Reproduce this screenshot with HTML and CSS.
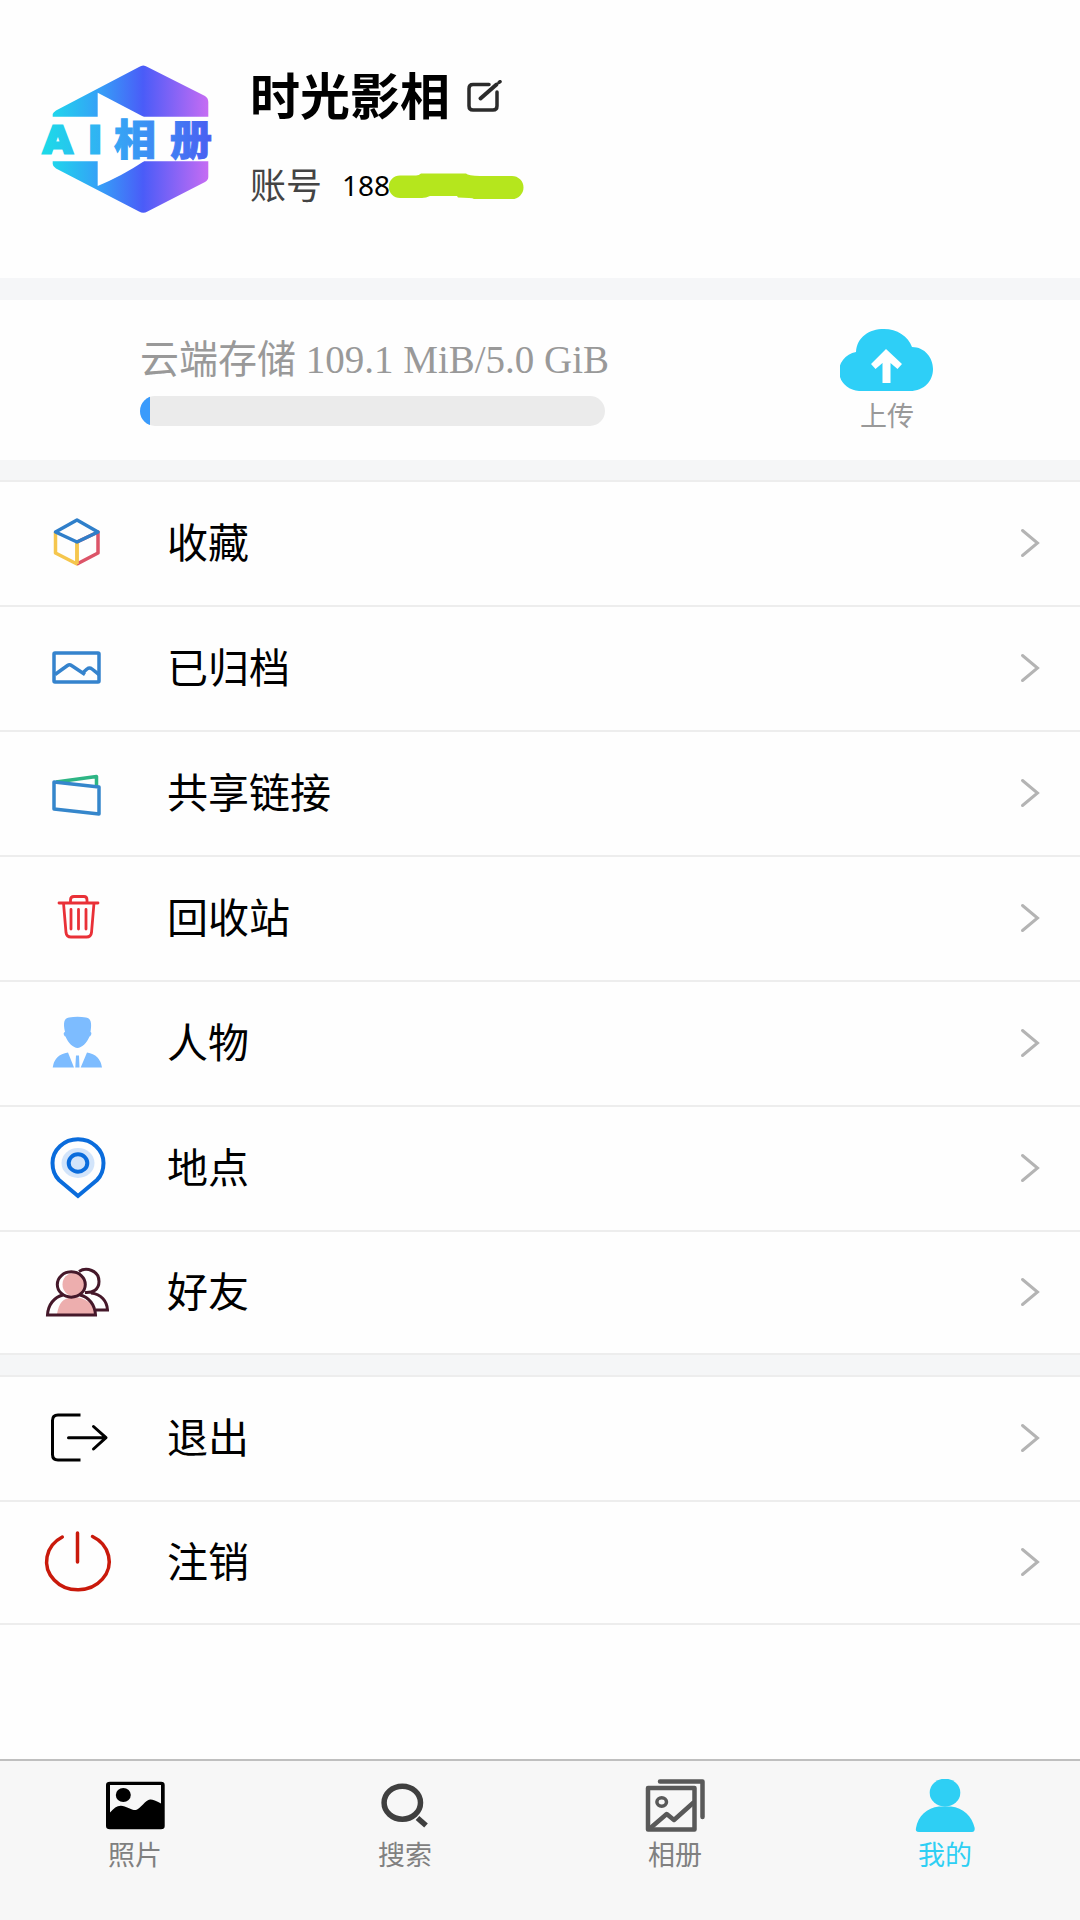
FILE: index.html
```html
<!DOCTYPE html>
<html lang="zh-CN">
<head>
<meta charset="utf-8">
<meta name="viewport" content="width=device-width, initial-scale=1">
<title>我的</title>
<link rel="stylesheet" href="styles.css">
</head>
<body>
<svg class="sprite" width="0" height="0" aria-hidden="true">
  <symbol id="chevron" viewBox="0 0 20 30"><path d="M2.500 2.500 17.500 15 2.500 27.500" fill="none" stroke="#b4b4b4" stroke-width="3" stroke-linecap="round"/></symbol>
</svg>

<header class="profile">
  <svg class="logo" viewBox="0 0 176 160" role="img" aria-label="AI相册">
    <defs>
      <linearGradient id="hex" gradientUnits="userSpaceOnUse" x1="12" y1="0" x2="169" y2="0">
        <stop offset="0" stop-color="#1fd6ec"/><stop offset=".3" stop-color="#35a0f7"/><stop offset=".58" stop-color="#4a5cf8"/><stop offset="1" stop-color="#c76cf3"/>
      </linearGradient>
      <linearGradient id="word" gradientUnits="userSpaceOnUse" x1="2" y1="0" x2="173" y2="0">
        <stop offset="0" stop-color="#1cdbe8"/><stop offset=".4" stop-color="#35aaf5"/><stop offset=".7" stop-color="#3f86f4"/><stop offset="1" stop-color="#4a5cf2"/>
      </linearGradient>
    </defs>
    <path d="M12.700 56.700V54Q13 52.500 16 50.500L99 7Q103.300 4 107.500 7L165 36Q168.300 38 168.300 42V56.700ZM12.700 101.300H168.300V117Q168.300 120 165 122L107.500 151.500Q103.300 154 99 151.500L16 108.500Q12.700 106.500 12.700 104Z" fill="url(#hex)"/>
    <path d="M57.700 32.700 104 57V101.300Q82 116 57.700 126Z" fill="#fff"/>
    <g fill="url(#word)" stroke="url(#word)">
      <text class="logo-latin" x="3" y="93">A</text>
      <text class="logo-latin" x="48" y="93">I</text>
      <text class="logo-cjk" x="74" y="95">相</text>
      <text class="logo-cjk" x="130" y="95">册</text>
    </g>
  </svg>
  <div class="identity">
    <div class="name-line">
      <h1>时光影相</h1>
      <button class="edit" type="button" aria-label="编辑">
        <svg width="36" height="32" viewBox="0 0 36 32" fill="none" stroke="#2b2b2b" stroke-width="3.500" stroke-linecap="round"><path d="M23 4.500H7Q3 4.500 3 8.500V26Q3 30 7 30H27Q31 30 31 26V12"/><path d="M14.500 18.500 30.500 4.500" stroke-width="4"/><path d="M33 2.500 34 1.700"/></svg>
      </button>
    </div>
    <p class="account"><span class="caption">账号</span><span class="number">188</span><svg class="mask" width="136" height="28" viewBox="0 0 136 28" aria-hidden="true"><path d="M12 3.500H28Q31 3.500 33 1.500H78Q80 3.500 92 4H124A11.500 11.500 0 0 1 124 27H86Q84 25.500 70 25.500L69 24H42Q38 26 34 26H12A11 11 0 0 1 12 3.500Z" fill="#b5e61d"/></svg></p>
  </div>
</header>

<main>
  <section class="storage">
    <div class="usage">
      <label for="quota">云端存储 109.1 MiB/5.0 GiB</label>
      <progress id="quota" max="5120" value="109.1"></progress>
    </div>
    <button class="upload" type="button">
      <svg width="94" height="62" viewBox="0 0 94 62"><path d="M21 62A21 19.700 0 0 1 16 23C17 8 29 0 44 0 57 0 68 7 72 18 85 18 93 29 93 40 93 52 84 62 70 62Z" fill="#2ecff7"/><path d="M42.500 54V34L35.500 40 31 35 46 20 62 35 57.500 40 50.500 34V54Z" fill="#fff"/></svg>
      <span>上传</span>
    </button>
  </section>

  <nav class="menu" aria-label="相册管理">
    <a href="#favorites">
      <svg class="icon" viewBox="0 0 76 76" fill="none" stroke-width="3.500" stroke-linejoin="round"><path d="M16.500 27V48L38 59V37" stroke="#f5c64d"/><path d="M38 59 59 48V27L38 37" stroke="#dc5468"/><path d="M38 37V59" stroke="#f5c64d"/><path d="M38 15 59 27 38 37 16.500 27Z" stroke="#2f7fca"/></svg>
      <span>收藏</span><svg class="chevron"><use href="#chevron"/></svg>
    </a>
    <a href="#archive">
      <svg class="icon" viewBox="0 0 76 76" fill="none" stroke="#3583cd" stroke-width="3.500" stroke-linejoin="round"><rect x="15" y="23" width="45" height="29" rx="1"/><path d="M16 44.500 28.500 35.500Q30.500 34 32.500 35.500L46 44.500M43.500 43 48 39Q50.500 37 53 39L60 44.500"/></svg>
      <span>已归档</span><svg class="chevron"><use href="#chevron"/></svg>
    </a>
    <a href="#shared">
      <svg class="icon" viewBox="0 0 76 76" fill="none" stroke-width="3.500" stroke-linejoin="round"><path d="M17 27 57.500 21.500V32" stroke="#2db584"/><path d="M15 27 60 32V59L15 54Z" stroke="#3586cb"/></svg>
      <span>共享链接</span><svg class="chevron"><use href="#chevron"/></svg>
    </a>
    <a href="#trash">
      <svg class="icon" viewBox="0 0 76 76" fill="none" stroke="#e93037" stroke-width="2.800" stroke-linecap="round"><path d="M20 23H59M31.500 22V20Q31.500 16.500 35 16.500H45Q48 16.500 48 20V22M24.500 23 27 52.500Q27.500 57 32 57H47.500Q52 57 52.500 52.500L55 23M32 29.500V49M39.500 29.500V49M47 29.500V49"/></svg>
      <span>回收站</span><svg class="chevron"><use href="#chevron"/></svg>
    </a>
    <a href="#people">
      <svg class="icon" viewBox="0 0 76 76" fill="#7dbcff"><path d="M26 27C24 18 25 13 30 12.500Q38.500 11 47 12.500C52 13 53 18 51.500 27 53 27 52.500 31 50.500 31.500 48 38 42.500 43 38.500 43S29 38 26.500 31.500C24.500 31 24 27 26 27ZM29 47.500 35 62.500H13.700Q15.500 49.500 29 47.500ZM48 47.500 41.700 62.500H63Q61 49.500 48 47.500ZM37 50.500H40L40.500 62.500H36.300Z"/></svg>
      <span>人物</span><svg class="chevron"><use href="#chevron"/></svg>
    </a>
    <a href="#places">
      <svg class="icon" viewBox="0 0 76 76" fill="none" stroke="#0a6cdc" stroke-width="4"><ellipse cx="39" cy="33" rx="16.500" ry="15" fill="#d2e4fa" stroke="none"/><ellipse cx="39" cy="33" rx="9.300" ry="8.700"/><path d="M39 66 20 50C15 45 13.500 40 13.500 33A25.500 23.700 0 0 1 64.500 33C64.500 40 63 45 58 50Z"/></svg>
      <span>地点</span><svg class="chevron"><use href="#chevron"/></svg>
    </a>
    <a href="#friends">
      <svg class="icon" viewBox="0 0 76 76" fill="none" stroke="#45182a" stroke-width="3"><path d="M40 17.500C47 13 60 16 60 27.500 60 35.500 54 39 46 38.500M52 39C62 40 68 47 68.500 56H57"/><path d="M18 60C20 49 24 44 33 43.500 44 42 55 49 56 60Z" fill="#edaeae" stroke="none"/><ellipse cx="34.500" cy="30.500" rx="11" ry="11.500" fill="#edaeae" stroke="none"/><ellipse cx="32.300" cy="30.500" rx="14" ry="12.700"/><path d="M24 41C15 43 9 51 8.500 61H56.500C56 51 50 43 41 41"/></svg>
      <span>好友</span><svg class="chevron"><use href="#chevron"/></svg>
    </a>
  </nav>

  <nav class="menu" aria-label="账号操作">
    <a href="#logout">
      <svg class="icon" viewBox="0 0 76 76" fill="none" stroke="#000" stroke-width="3" stroke-linejoin="round"><path d="M41.500 15H19Q13.500 15 13.500 20.500V54.500Q13.500 60 19 60H41.500"/><path d="M29.500 37.700H66M54.500 26.500 67 37.700 54.500 49" stroke-linecap="round"/></svg>
      <span>退出</span><svg class="chevron"><use href="#chevron"/></svg>
    </a>
    <a href="#deactivate">
      <svg class="icon" viewBox="0 0 76 76" fill="none" stroke="#c9190b" stroke-width="3.500" stroke-linecap="round"><path d="M23.300 13A31.300 28.300 0 1 0 53.500 12.500M38.500 9V38"/></svg>
      <span>注销</span><svg class="chevron"><use href="#chevron"/></svg>
    </a>
  </nav>
</main>

<nav class="tabs" aria-label="主导航">
  <a href="#photos">
    <svg viewBox="0 0 60 54"><path fill-rule="evenodd" d="M5 2.700H56Q59.700 2.700 59.700 6V47Q59.700 50.300 56 50.300H5Q1 50.300 1 47V6Q1 2.700 5 2.700ZM5 6V33.500C9 29 12 26.500 16 26.700 21 27 27 31.500 31 31 35 30 41 20.500 45 20.500Q48 20 56 24.500V6Z"/><ellipse cx="18.300" cy="16" rx="7.500" ry="7"/></svg>
    <span>照片</span>
  </a>
  <a href="#search">
    <svg viewBox="0 0 60 54" fill="none" stroke="#3f3f3f" stroke-width="5.500"><ellipse cx="27.300" cy="23.700" rx="18.200" ry="16.500"/><path d="M42.500 39 51 46.500"/></svg>
    <span>搜索</span>
  </a>
  <a href="#albums">
    <svg viewBox="0 0 60 54" fill="none" stroke="#595959" stroke-width="4.500" stroke-linejoin="round" stroke-linecap="round"><rect x="3" y="9" width="46.500" height="41.500"/><path d="M15 2.500H57.500V38M6 48.500 21.700 35 29 41 48 24"/><ellipse cx="16.700" cy="23" rx="4.800" ry="4.200" stroke-width="3.500"/></svg>
    <span>相册</span>
  </a>
  <a class="current" href="#me" aria-current="page">
    <svg viewBox="0 0 60 54" fill="#2ecff4"><ellipse cx="30" cy="13.700" rx="15.300" ry="14"/><path d="M24 27.500H36C48 29 57 37 59.700 49Q60 53 57 53H4Q0 53 1 49C3 37 12 29 24 27.500Z"/></svg>
    <span>我的</span>
  </a>
</nav>
</body>
</html>
```
FILE: styles.css
```css
* {
  box-sizing: border-box;
}

body {
  display: flex;
  flex-direction: column;
  min-height: 100vh;
  margin: 0;
  background: #fefefe;
  color: #000;
  font-family: "Noto Sans CJK SC", "Noto Sans", sans-serif;
}

h1,
p {
  margin: 0;
}

a {
  color: inherit;
  text-decoration: none;
}

button {
  padding: 0;
  border: 0;
  background: none;
  color: inherit;
  font: inherit;
  cursor: pointer;
}

svg {
  display: block;
  flex: none;
}

.sprite {
  position: absolute;
}

/* Profile */
.profile {
  display: flex;
  gap: 34px;
  min-height: 278px;
  padding: 60px 40px 0;
}

.logo {
  width: 176px;
  height: 160px;
}

.logo-latin {
  font: bold 38px "DejaVu Sans", sans-serif;
  stroke-width: 3px;
}

.logo-cjk {
  font: 900 42px "Noto Sans CJK SC", sans-serif;
  stroke-width: 1px;
}

.name-line {
  display: flex;
  align-items: center;
  gap: 16px;
}

h1 {
  padding-bottom: 6px;
  font-size: 50px;
  font-weight: 700;
  line-height: 66px;
}

.account {
  display: flex;
  align-items: center;
  margin-top: 31px;
  color: #444;
  font-size: 36px;
  line-height: 44px;
}

.caption {
  padding-bottom: 4px;
  line-height: 40px;
}

.number {
  margin-left: 20px;
  color: #000;
  font-family: "Noto Sans", sans-serif;
  font-size: 28px;
}

.mask {
  margin: 2px 0 0 -2px;
}

/* Cloud storage */
.storage {
  display: flex;
  justify-content: space-between;
  align-items: flex-start;
  min-height: 182px;
  padding: 29px 146px 0 140px;
  border-top: 22px solid #f5f6f8;
}

.usage {
  display: flex;
  flex: 0 1 465px;
  flex-direction: column;
  gap: 12px;
  min-width: 0;
  padding-top: 7px;
}

.usage label {
  color: #999;
  font-family: "Liberation Serif", "Noto Sans CJK SC", serif;
  font-size: 39px;
  line-height: 48px;
  white-space: nowrap;
}

progress {
  display: block;
  width: 100%;
  height: 30px;
  border: 0;
  border-radius: 15px;
  background: #ebebeb;
  overflow: hidden;
  appearance: none;
}

progress::-webkit-progress-bar {
  background: #ebebeb;
}

progress::-webkit-progress-value {
  background: #3a9bfc;
}

progress::-moz-progress-bar {
  background: #3a9bfc;
}

.upload {
  display: flex;
  flex-direction: column;
  align-items: center;
  gap: 7px;
  color: #999;
  font-size: 27px;
  line-height: 34px;
}

/* Menu lists */
.menu {
  margin-top: 20px;
  border-top: 2px solid #ededed;
  box-shadow: 0 -20px #f5f6f7;
}

.menu a {
  display: flex;
  align-items: center;
  height: 125px;
  padding: 0 40px 2px 39px;
  border-bottom: 2px solid #ededed;
  font-size: 41px;
  line-height: 60px;
}

.menu a:last-child {
  height: 123px;
}

.menu span {
  flex: 1;
  margin-left: 52px;
  padding-bottom: 6px;
}

.icon {
  width: 76px;
  height: 76px;
}

.chevron {
  width: 20px;
  height: 30px;
}

/* Bottom tabs */
.tabs {
  display: grid;
  grid-template-columns: repeat(4, 1fr);
  min-height: 161px;
  margin-top: auto;
  padding-top: 18px;
  border-top: 2px solid #bfbfbf;
  background: #f7f7f7;
  color: #808080;
  font-size: 27px;
  line-height: 34px;
}

.tabs a {
  display: flex;
  flex-direction: column;
  align-items: center;
  gap: 4px;
}

.tabs svg {
  width: 60px;
  height: 54px;
}

.tabs .current {
  color: #2ecff4;
}
```
